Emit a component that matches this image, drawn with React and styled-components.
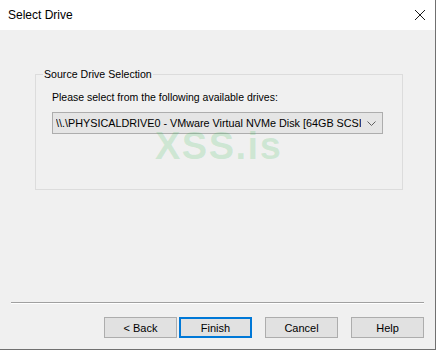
import React from "react";
import styled, { createGlobalStyle } from "styled-components";

const GlobalStyle = createGlobalStyle`
    html, body {
        margin: 0;
        padding: 0;
        background: #f0f0f0;
    }
    * {
        box-sizing: border-box;
    }
`;

const buttons = [
    { label: "< Back" },
    { label: "Finish", isDefault: true },
    { label: "Cancel", gapBefore: 13 },
    { label: "Help", gapBefore: 13 },
];

function App() {
    return (
        <Window>
            <GlobalStyle />
            <TitleBar>
                <Title>Select Drive</Title>
                <CloseIcon width="12" height="12" viewBox="0 0 12 12">
                    <path d="M1 1 L11 11 M11 1 L1 11" stroke="#1a1a1a" strokeWidth="1" fill="none" />
                </CloseIcon>
            </TitleBar>
            <Body>
                <GroupBox>
                    <Legend>Source Drive Selection</Legend>
                    <Label>Please select from the following available drives:</Label>
                    <Combo>
                        <ComboText>\\.\PHYSICALDRIVE0 - VMware Virtual NVMe Disk [64GB SCSI]</ComboText>
                        <Chevron width="9" height="5" viewBox="0 0 9 5">
                            <path d="M0.5 0.5 L4.5 4.5 L8.5 0.5" stroke="#606060" strokeWidth="1" fill="none" />
                        </Chevron>
                    </Combo>
                    <Watermark>XSS.is</Watermark>
                </GroupBox>
                <Footer>
                    <Separator />
                    <ButtonRow>
                        {buttons.map((b) => (
                            <DialogButton key={b.label} $isDefault={b.isDefault} $gap={b.gapBefore || 2}>
                                {b.label}
                            </DialogButton>
                        ))}
                    </ButtonRow>
                </Footer>
            </Body>
        </Window>
    );
}

export default App;

const Window = styled.div`
    width: 436px;
    height: 350px;
    display: flex;
    flex-direction: column;
    border-right: 1px solid #707070;
    border-bottom: 1px solid #707070;
    font-family: "Liberation Sans", Arial, sans-serif;
    color: #000;
`;

const TitleBar = styled.div`
    height: 30px;
    flex-shrink: 0;
    background: #fff;
    display: flex;
    align-items: center;
    justify-content: space-between;
    padding: 0 9px 0 8px;
`;

const Title = styled.div`
    font-size: 12px;
    margin-top: -1px;
`;

const CloseIcon = styled.svg`
    display: block;
`;

const Body = styled.div`
    flex: 1;
    display: flex;
    flex-direction: column;
    background: #f0f0f0;
`;

const GroupBox = styled.div`
    position: relative;
    margin: 44px 0 0 35px;
    width: 368px;
    height: 116px;
    border: 1px solid #dcdcdc;
    padding: 15px 0 0 16px;
`;

const Legend = styled.span`
    position: absolute;
    top: -8px;
    left: 7px;
    padding: 0 1px;
    background: #f0f0f0;
    font-size: 10.6px;
    line-height: 14px;
`;

const Label = styled.div`
    font-size: 10.5px;
    line-height: 14px;
    margin-bottom: 8px;
`;

const Combo = styled.div`
    width: 331px;
    height: 22px;
    border: 1px solid #adadad;
    background: #e5e5e5;
    display: flex;
    align-items: center;
    padding: 0 6px 0 3px;
    gap: 6px;
`;

const ComboText = styled.div`
    flex: 1;
    overflow: hidden;
    white-space: nowrap;
    font-size: 10.8px;
    line-height: 14px;
`;

const Chevron = styled.svg`
    display: block;
    flex-shrink: 0;
`;

const Watermark = styled.div`
    position: absolute;
    left: 119px;
    top: 49px;
    font-family: "Liberation Sans", Arial, sans-serif;
    font-weight: bold;
    font-size: 38px;
    letter-spacing: 1.5px;
    line-height: 44px;
    color: rgba(60, 190, 90, 0.2);
    pointer-events: none;
`;

const Footer = styled.div`
    margin-top: auto;
    padding: 0 11px 11px 11px;
`;

const Separator = styled.div`
    height: 2px;
    border-top: 1px solid #a0a0a0;
    border-bottom: 1px solid #ffffff;
    margin-bottom: 13px;
`;

const ButtonRow = styled.div`
    display: flex;
    justify-content: flex-end;
`;

const DialogButton = styled.button`
    width: 73px;
    height: 21px;
    margin-left: ${(p) => p.$gap}px;
    padding: 0;
    background: #e1e1e1;
    border: ${(p) => (p.$isDefault ? "2px solid #0078d7" : "1px solid #adadad")};
    font-family: "Liberation Sans", Arial, sans-serif;
    font-size: 11px;
    color: #000;
    cursor: default;
`;
